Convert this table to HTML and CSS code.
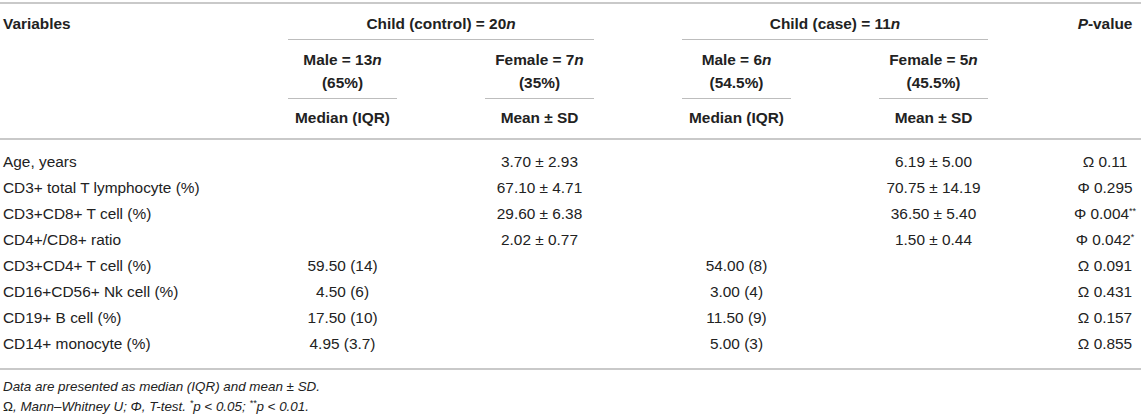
FILE: index.html
```html
<!DOCTYPE html>
<html>
<head>
<meta charset="utf-8">
<link rel="stylesheet" href="styles.css">
</head>
<body>
<div class="table">
  <div class="head">
    <div class="h-var">Variables</div>
    <div class="h-group g1">Child (control) = 20<i>n</i></div>
    <div class="h-group g2">Child (case) = 11<i>n</i></div>
    <div class="h-p"><i>P</i>-value</div>
    <div class="h-sub c2">Male = 13<i>n</i><br>(65%)</div>
    <div class="h-sub c3">Female = 7<i>n</i><br>(35%)</div>
    <div class="h-sub c4">Male = 6<i>n</i><br>(54.5%)</div>
    <div class="h-sub c5">Female = 5<i>n</i><br>(45.5%)</div>
    <div class="h-stat c2">Median (IQR)</div>
    <div class="h-stat c3">Mean ± SD</div>
    <div class="h-stat c4">Median (IQR)</div>
    <div class="h-stat c5">Mean ± SD</div>
  </div>
  <div class="body">
    <div class="row"><div class="var">Age, years</div><div></div><div>3.70 ± 2.93</div><div></div><div>6.19 ± 5.00</div><div class="p">Ω 0.11</div></div>
    <div class="row"><div class="var">CD3+ total T lymphocyte (%)</div><div></div><div>67.10 ± 4.71</div><div></div><div>70.75 ± 14.19</div><div class="p">Φ 0.295</div></div>
    <div class="row"><div class="var">CD3+CD8+ T cell (%)</div><div></div><div>29.60 ± 6.38</div><div></div><div>36.50 ± 5.40</div><div class="p">Φ 0.004<sup>**</sup></div></div>
    <div class="row"><div class="var">CD4+/CD8+ ratio</div><div></div><div>2.02 ± 0.77</div><div></div><div>1.50 ± 0.44</div><div class="p">Φ 0.042<sup>*</sup></div></div>
    <div class="row"><div class="var">CD3+CD4+ T cell (%)</div><div>59.50 (14)</div><div></div><div>54.00 (8)</div><div></div><div class="p">Ω 0.091</div></div>
    <div class="row"><div class="var">CD16+CD56+ Nk cell (%)</div><div>4.50 (6)</div><div></div><div>3.00 (4)</div><div></div><div class="p">Ω 0.431</div></div>
    <div class="row"><div class="var">CD19+ B cell (%)</div><div>17.50 (10)</div><div></div><div>11.50 (9)</div><div></div><div class="p">Ω 0.157</div></div>
    <div class="row"><div class="var">CD14+ monocyte (%)</div><div>4.95 (3.7)</div><div></div><div>5.00 (3)</div><div></div><div class="p">Ω 0.855</div></div>
  </div>
  <div class="foot">
    <p>Data are presented as median (IQR) and mean ± SD.</p>
    <p><span class="up">Ω</span>, Mann–Whitney U; Φ, T-test. <sup>*</sup>p &lt; 0.05; <sup>**</sup>p &lt; 0.01.</p>
  </div>
</div>
</body>
</html>
```
FILE: styles.css
```css
html, body {
  margin: 0;
  padding: 0;
  background: #ffffff;
}

body {
  font-family: "Liberation Sans", Arial, Helvetica, sans-serif;
  color: #222222;
  font-size: 15.4px;
}

.table {
  width: 1141px;
  margin-top: 2px;
}

.head {
  display: grid;
  grid-template-columns: 244px 197px 197px 197px 197px 1fr;
  grid-template-rows: auto auto auto;
  border-top: 2px solid #c9c9c9;
  border-bottom: 2px solid #c9c9c9;
  font-weight: bold;
  line-height: 23px;
}

.head i {
  font-style: italic;
}

.h-var {
  grid-column: 1;
  grid-row: 1 / 4;
  padding: 8px 0 0 3px;
}

.h-p {
  grid-column: 6;
  grid-row: 1 / 4;
  padding: 8px 0 0 37px;
  text-align: center;
}

.h-group {
  grid-row: 1;
  margin: 0 44px;
  padding: 8px 0 4px;
  text-align: center;
  border-bottom: 1px solid #bdbdbd;
}

.g1 { grid-column: 2 / 4; }
.g2 { grid-column: 4 / 6; }

.c2 { grid-column: 2; }
.c3 { grid-column: 3; }
.c4 { grid-column: 4; }
.c5 { grid-column: 5; }

.h-sub {
  grid-row: 2;
  margin: 0 44px;
  padding: 8px 0 4px;
  text-align: center;
  border-bottom: 1px solid #bdbdbd;
}

.h-stat {
  grid-row: 3;
  padding: 7px 0 9px;
  text-align: center;
}

.body {
  padding: 9px 0 11px;
  border-bottom: 2px solid #c9c9c9;
}

.row {
  display: grid;
  grid-template-columns: 244px 197px 197px 197px 197px 1fr;
  line-height: 26px;
  text-align: center;
}

.row .var {
  text-align: left;
  padding-left: 3px;
}

.row .p {
  padding-left: 37px;
  white-space: nowrap;
}

sup {
  font-size: 9px;
  line-height: 0;
  vertical-align: 5px;
}

.foot {
  padding-top: 7px;
  font-size: 13.4px;
  font-style: italic;
  line-height: 20px;
  padding-left: 3px;
}

.foot p {
  margin: 0;
}

.foot .up {
  font-style: normal;
}
```
